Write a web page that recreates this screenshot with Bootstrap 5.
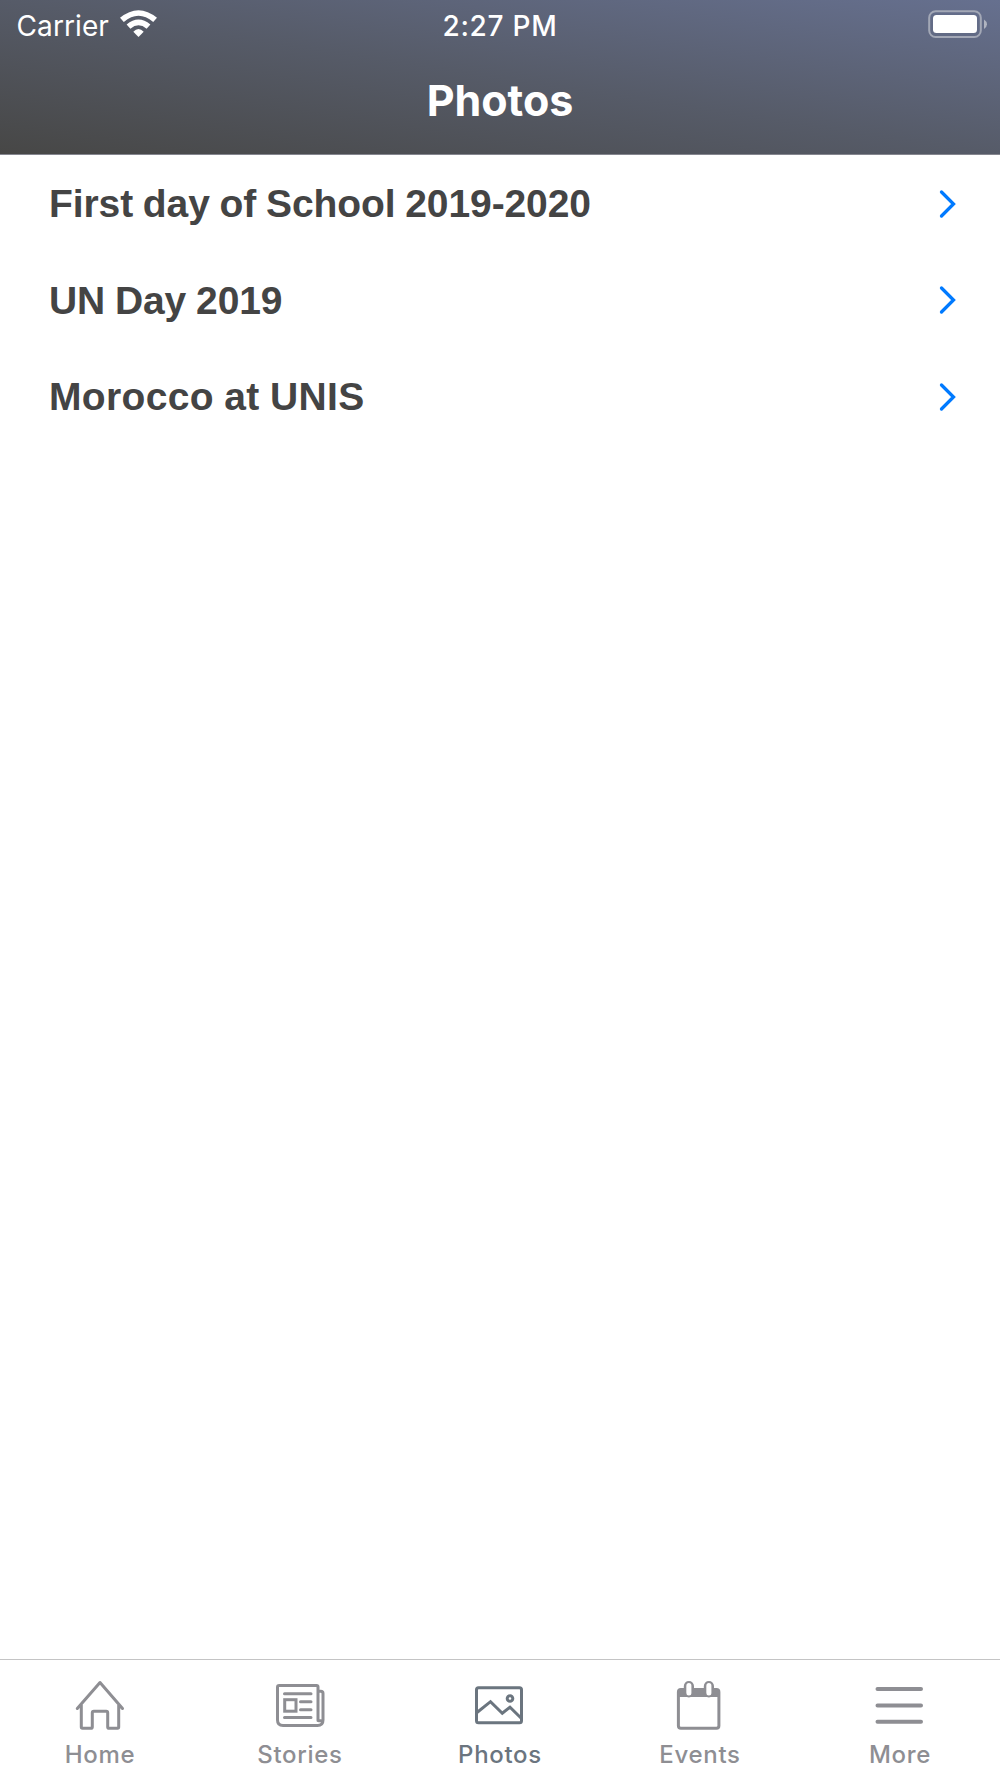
<!DOCTYPE html>
<html lang="en">
<head>
<meta charset="utf-8">
<meta name="viewport" content="width=device-width, initial-scale=1">
<title>Photos</title>
<link href="https://cdn.jsdelivr.net/npm/bootstrap@5.3.0/dist/css/bootstrap.min.css" rel="stylesheet">
<style>
body{font-family:Inter,"Liberation Sans",sans-serif;background:#fff}
svg{display:block;flex:none}
.app-header{height:155px;background:linear-gradient(to top right,#474746,#565b68 50%,#66708f);border-bottom:1px solid #85868f;color:#fff}
.status-bar{height:50px;display:grid;grid-template-columns:1fr auto 1fr;padding:0 13px;font-size:28px;line-height:52px}
.carrier{width:106px;padding-left:3.500px;letter-spacing:.1px}
.clock{font-weight:500;letter-spacing:.75px}
.app-title{font-size:43px;font-weight:700;line-height:54px;padding-top:23px;margin:0;letter-spacing:-.05px}
.album{height:96.5px;padding:1px 44px 0 49px;color:#444;text-decoration:none;font:bold 39px/95px "Liberation Sans",Arial,sans-serif;letter-spacing:-.1px;word-spacing:-.9px;white-space:nowrap}
.album:hover{color:#444}
.album-wide{letter-spacing:.35px}
.chevron{fill:none;stroke:#007aff;stroke-width:3.3;stroke-linecap:round;stroke-linejoin:miter}
.tab-bar{height:119px;border-top:1px solid #c4c4c5}
.tab-item{flex:1 1 0;color:#8e8e93;text-decoration:none;font-size:24px;font-weight:450;line-height:28px;letter-spacing:.7px;padding-top:20px}
.tab-item.active{color:#6b757f}
.tab-item svg{fill:none;stroke:currentColor;stroke-width:3;stroke-linecap:round;stroke-linejoin:round}
.tab-text{margin-top:9px}
</style>
<script src="https://cdn.jsdelivr.net/npm/bootstrap@5.3.0/dist/js/bootstrap.bundle.min.js"></script>
</head>
<body>
<div class="d-flex flex-column vh-100 overflow-hidden">
  <header class="app-header flex-shrink-0">
    <div class="status-bar">
      <div class="d-flex">
        <span class="carrier">Carrier</span>
        <svg width="38" height="50" viewBox="119 0 38 50" fill="#fff"><path d="M120 17.800Q138.500 2.500 157 17.800L153.200 22Q138.500 9.500 123.800 22Z"/><path d="M126.600 24.600Q138.500 14.500 150.400 24.600L146.600 28.700Q138.500 22 130.400 28.700Z"/><path d="M133.300 31.700Q138.500 26.500 143.700 31.700L138.500 37Z"/></svg>
      </div>
      <span class="clock">2:27 PM</span>
      <div class="d-flex justify-content-end">
        <svg width="60" height="50" viewBox="927 0 60 50"><rect x="929.200" y="11.200" width="51.600" height="25.800" rx="6.500" fill="none" stroke="#a3a8b6" stroke-width="2"/><rect x="933" y="15" width="44" height="18" rx="3.500" fill="#fff"/><path d="M984 19.500Q987 21.500 987 24.200T984 29Z" fill="#b0b4c0"/></svg>
      </div>
    </div>
    <h1 class="app-title text-center">Photos</h1>
  </header>
  <main class="flex-grow-1">
    <a href="#" class="album d-flex align-items-center justify-content-between"><span>First day of School 2019-2020</span><svg class="chevron" width="18" height="30" viewBox="0 0 18 30"><path d="M3.500 3 15.500 15 3.500 27"/></svg></a>
    <a href="#" class="album d-flex align-items-center justify-content-between"><span>UN Day 2019</span><svg class="chevron" width="18" height="30" viewBox="0 0 18 30"><path d="M3.500 3 15.500 15 3.500 27"/></svg></a>
    <a href="#" class="album album-wide d-flex align-items-center justify-content-between"><span>Morocco at UNIS</span><svg class="chevron" width="18" height="30" viewBox="0 0 18 30"><path d="M3.500 3 15.500 15 3.500 27"/></svg></a>
  </main>
  <nav class="tab-bar d-flex flex-shrink-0">
    <a href="#" class="tab-item d-flex flex-column align-items-center">
      <svg width="50" height="52" viewBox="75 1680 50 52"><path d="M77.300 1708.500 100 1682.500l22.500 26M81.300 1705v22q0 1.200 1.200 1.200h8.500q1.300 0 1.300-1.300v-14.200q0-1.500 1.500-1.500h12.400q1.500 0 1.500 1.500v14.200q0 1.300 1.300 1.300h8.500q1.200 0 1.200-1.200v-22"/></svg>
      <span class="tab-text">Home</span></a>
    <a href="#" class="tab-item d-flex flex-column align-items-center">
      <svg width="50" height="52" viewBox="275 1680 50 52"><path d="M318 1720.500V1687q0-1.500-1.500-1.500h-37.300q-1.700 0-1.700 1.700V1720q0 5.500 5.500 5.500h34.500q5.500 0 5.500-5.500v-26.500q0-2.200-2.200-2.200H318M318 1718.500q0 3 2.500 2.200M284.500 1693.700h26.500M300.500 1701.700h10.500M300.500 1709.700h10.500M284.500 1717.500h26.500"/><rect x="284.700" y="1699.700" width="11.300" height="11.500" stroke-linejoin="miter"/></svg>
      <span class="tab-text">Stories</span></a>
    <a href="#" class="tab-item active d-flex flex-column align-items-center" aria-current="page">
      <svg width="50" height="52" viewBox="475 1680 50 52"><rect x="476.500" y="1687.700" width="45" height="35" rx="2"/><path d="M477 1712.500 490.500 1701.700 502.300 1713.300 510 1707.200 521.500 1718.500" stroke-linejoin="miter" stroke-linecap="butt"/><circle cx="510" cy="1698.500" r="2.800"/></svg>
      <span class="tab-text">Photos</span></a>
    <a href="#" class="tab-item d-flex flex-column align-items-center">
      <svg width="50" height="52" viewBox="675 1680 50 52"><rect x="678.400" y="1689.500" width="40.500" height="38.700" rx="2.500"/><path d="M678.500 1689.500h40.300v7.500h-40.300z" fill="currentColor" stroke="none"/><rect x="685.300" y="1682.500" width="7.200" height="13.500" rx="3.600" fill="#fff"/><rect x="705.300" y="1682.500" width="7.200" height="13.500" rx="3.600" fill="#fff"/><path d="M688.900 1685.500v7.500M708.900 1685.500v7.500" stroke="#fff"style="stroke:#fff;stroke-width:5px"/></svg>
      <span class="tab-text">Events</span></a>
    <a href="#" class="tab-item d-flex flex-column align-items-center">
      <svg width="50" height="52" viewBox="875 1680 50 52"><path d="M877.500 1689h43.500M877.500 1705.400h43.500M877.500 1721.700h43.500" style="stroke-width:4px"/></svg>
      <span class="tab-text">More</span></a>
  </nav>
</div>
</body>
</html>
